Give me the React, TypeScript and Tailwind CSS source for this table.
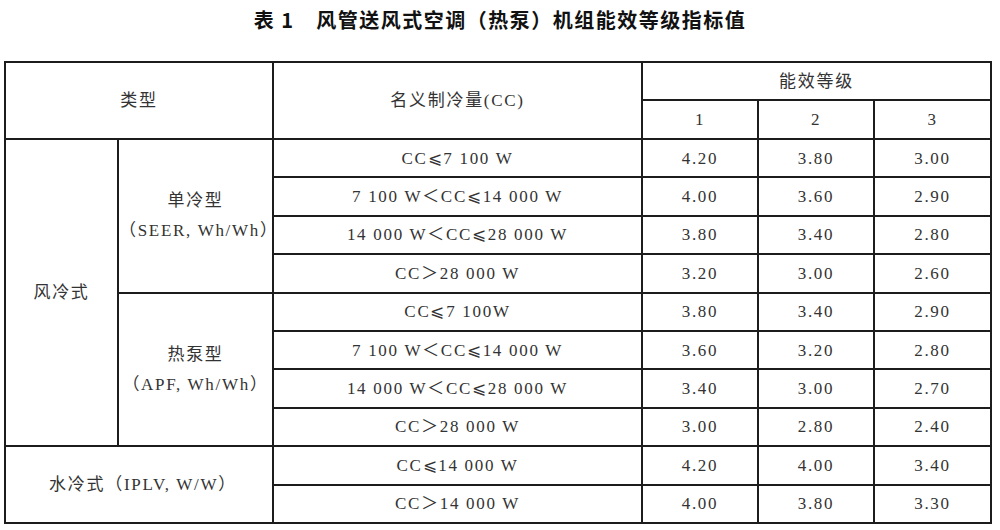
const serif = "font-['Liberation_Serif','DejaVu_Serif','Noto_Sans_CJK_SC',serif]"

type Row = { cc: string; v: [string, string, string] }

const singleCool: Row[] = [
  { cc: 'CC⩽7 100 W', v: ['4.20', '3.80', '3.00'] },
  { cc: '7 100 W＜CC⩽14 000 W', v: ['4.00', '3.60', '2.90'] },
  { cc: '14 000 W＜CC⩽28 000 W', v: ['3.80', '3.40', '2.80'] },
  { cc: 'CC＞28 000 W', v: ['3.20', '3.00', '2.60'] },
]

const heatPump: Row[] = [
  { cc: 'CC⩽7 100W', v: ['3.80', '3.40', '2.90'] },
  { cc: '7 100 W＜CC⩽14 000 W', v: ['3.60', '3.20', '2.80'] },
  { cc: '14 000 W＜CC⩽28 000 W', v: ['3.40', '3.00', '2.70'] },
  { cc: 'CC＞28 000 W', v: ['3.00', '2.80', '2.40'] },
]

const waterCool: Row[] = [
  { cc: 'CC⩽14 000 W', v: ['4.20', '4.00', '3.40'] },
  { cc: 'CC＞14 000 W', v: ['4.00', '3.80', '3.30'] },
]

function Cell({
  className = '',
  children,
}: {
  className?: string
  children: React.ReactNode
}) {
  return (
    <div className={`flex items-center justify-center bg-white text-center ${className}`}>
      {children}
    </div>
  )
}

function DataRow({ row }: { row: Row }) {
  return (
    <>
      <Cell className="col-start-3">{row.cc}</Cell>
      {row.v.map((value, i) => (
        <Cell key={i}>{value}</Cell>
      ))}
    </>
  )
}

export default function App() {
  return (
    <div className="h-[530px] w-[1000px] bg-white">
      <h1 className="flex h-[61px] justify-center pt-[8px] font-['Noto_Sans_CJK_SC',sans-serif] text-[20px] font-bold leading-[24px] tracking-[1.5px] text-[#111]">
        表 1　风管送风式空调（热泵）机组能效等级指标值
      </h1>

      <div
        className={`ml-[4px] grid h-[463px] w-[988px] grid-cols-[111px_153px_367px_114px_114px_115px] grid-rows-[36px_37px_repeat(10,1fr)] gap-[2px] bg-[#1c1c1c] p-[2px] text-[17px] leading-none tracking-[1.7px] text-[#333] ${serif}`}
      >
        {/* header */}
        <Cell className="col-span-2 row-span-2">类型</Cell>
        <Cell className="row-span-2">名义制冷量(CC)</Cell>
        <Cell className="col-span-3">能效等级</Cell>
        <Cell className="col-start-4">1</Cell>
        <Cell>2</Cell>
        <Cell>3</Cell>

        {/* air cooled */}
        <Cell className="col-start-1 row-span-8 row-start-3">风冷式</Cell>
        <Cell className="col-start-2 row-span-4 row-start-3 flex-col gap-[13px]">
          <span>单冷型</span>
          <span>（SEER, Wh/Wh）</span>
        </Cell>
        <Cell className="col-start-2 row-span-4 row-start-7 flex-col gap-[13px]">
          <span>热泵型</span>
          <span>（APF, Wh/Wh）</span>
        </Cell>
        <Cell className="col-span-2 col-start-1 row-span-2 row-start-11 pl-[8px]">
          水冷式（IPLV, W/W）
        </Cell>

        {singleCool.map((row, i) => (
          <DataRow key={`s${i}`} row={row} />
        ))}
        {heatPump.map((row, i) => (
          <DataRow key={`h${i}`} row={row} />
        ))}
        {waterCool.map((row, i) => (
          <DataRow key={`w${i}`} row={row} />
        ))}
      </div>
    </div>
  )
}
